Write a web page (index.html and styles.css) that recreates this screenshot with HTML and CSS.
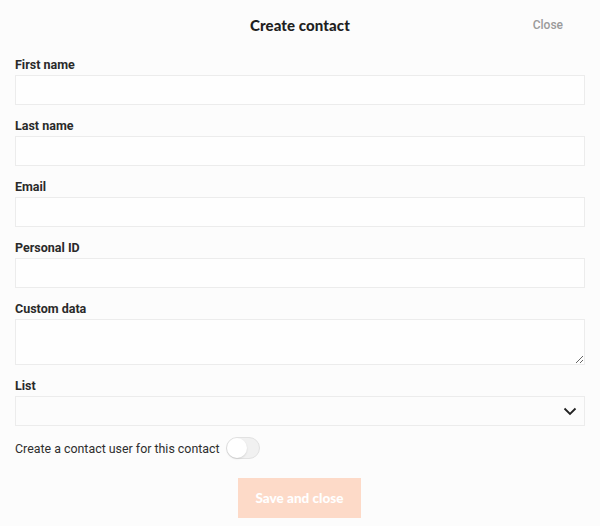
FILE: index.html
```html
<!DOCTYPE html>
<html lang="en">
<head>
<meta charset="utf-8">
<title>Create contact</title>
<link rel="stylesheet" href="styles.css">
</head>
<body>
<div class="modal">
  <header class="header">
    <h1 class="title">Create contact</h1>
    <a class="close" href="#">Close</a>
  </header>
  <form class="form">
    <div class="field">
      <label class="label">First name</label>
      <input class="input" type="text">
    </div>
    <div class="field">
      <label class="label">Last name</label>
      <input class="input" type="text">
    </div>
    <div class="field">
      <label class="label">Email</label>
      <input class="input" type="text">
    </div>
    <div class="field">
      <label class="label">Personal ID</label>
      <input class="input" type="text">
    </div>
    <div class="field">
      <label class="label">Custom data</label>
      <textarea class="input textarea"></textarea>
    </div>
    <div class="field">
      <label class="label">List</label>
      <div class="select">
        <svg class="chevron" width="14" height="9" viewBox="0 0 14 9"><path d="M1.5 1.5 L7 7 L12.5 1.5" fill="none" stroke="#222" stroke-width="1.8"/></svg>
      </div>
    </div>
    <div class="toggle-row">
      <span class="toggle-text">Create a contact user for this contact</span>
      <span class="toggle"><span class="knob"></span></span>
    </div>
    <div class="actions">
      <button class="save" type="button">Save and close</button>
    </div>
  </form>
</div>
</body>
</html>
```
FILE: styles.css
```css
* { box-sizing: border-box; }
html, body { margin: 0; padding: 0; }
body {
  background: #fcfcfc;
  font-family: Roboto, "Liberation Sans", sans-serif;
  color: #2a2a2a;
  width: 600px;
  height: 526px;
  overflow: hidden;
}
.modal { padding: 0 15px; }
.header {
  position: relative;
  height: 50px;
  display: flex;
  align-items: center;
  justify-content: center;
}
.title {
  margin: 0;
  font-family: Lato, "Open Sans", sans-serif;
  font-weight: 900;
  font-size: 15px;
  color: #1f1f1f;
  letter-spacing: 0.1px;
}
.close {
  position: absolute;
  right: 22px;
  top: 17px;
  font-size: 12px;
  font-weight: 500;
  color: #9a9a9a;
  text-decoration: none;
  line-height: 16px;
}
.form { padding-top: 7px; }
.field { margin-bottom: 13px; }
.label {
  display: block;
  font-size: 12.5px;
  font-weight: 700;
  line-height: 16px;
  margin-bottom: 2px;
  color: #2a2a2a;
}
.input {
  display: block;
  width: 100%;
  height: 30px;
  border: 1px solid #ececec;
  background: #fefefe;
  margin: 0;
  padding: 4px 8px;
  font: inherit;
  outline: none;
}
.textarea { height: 46px; resize: vertical; }
.select {
  height: 30px;
  border: 1px solid #ececec;
  background: #fcfcfc;
  display: flex;
  align-items: center;
  justify-content: flex-end;
  padding-right: 7px;
}
.toggle-row {
  display: flex;
  align-items: center;
  gap: 6px;
  margin-top: -2px;
  height: 22px;
}
.toggle-text { font-size: 12.4px; color: #2e2e2e; }
.toggle {
  width: 34px;
  height: 22px;
  border-radius: 11px;
  background: #f1f1f1;
  border: 1px solid #e2e2e2;
  position: relative;
}
.knob {
  position: absolute;
  left: 0;
  top: 0;
  width: 20px;
  height: 20px;
  border-radius: 50%;
  background: #fff;
  box-shadow: 0 1px 2px rgba(0,0,0,0.12);
}
.actions {
  display: flex;
  justify-content: center;
  margin-top: 19px;
}
.save {
  width: 123px;
  height: 40px;
  border: none;
  background: #fddac8;
  color: #fff;
  font-family: Lato, "Open Sans", sans-serif;
  font-weight: 900;
  font-size: 13.5px;
  margin-left: -1px;
}
```
